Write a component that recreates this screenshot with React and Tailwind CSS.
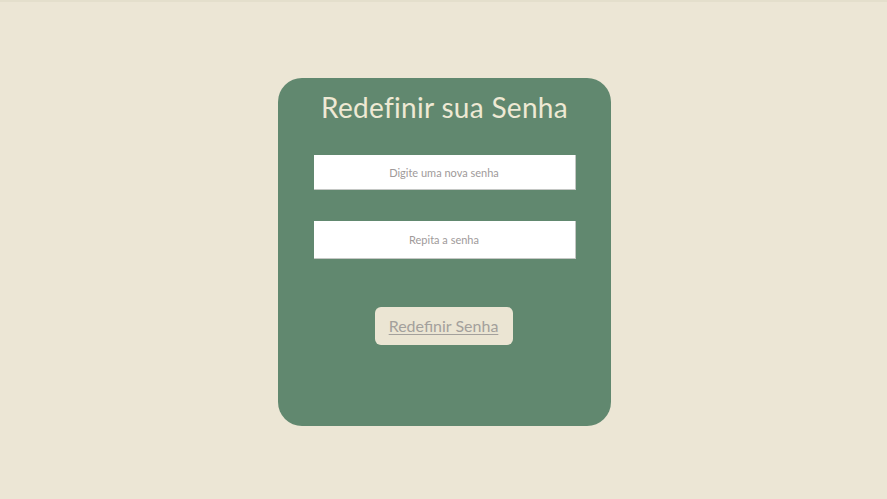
export default function App() {
  return (
    <div className="min-h-[499px] w-full bg-[#ece6d5] flex flex-col" style={{ fontFamily: "Lato, 'Noto Sans', sans-serif" }}>
      <div className="h-[2px] bg-[#e4dfcc]" />
      <div className="flex-1 flex items-start justify-center pt-[76px]">
        <div className="ml-[2px] w-[333px] h-[348px] bg-[#61886f] rounded-[24px] flex flex-col items-center pt-[11px]">
          <h1 className="text-[28px] leading-[36px] text-[#eee9d4] font-normal tracking-[0.3px]">Redefinir sua Senha</h1>
          <input
            type="password"
            placeholder="Digite uma nova senha"
            className="mt-[30px] w-[262px] h-[35px] bg-white text-center text-[11px] text-[#666] placeholder:text-[#a09a9a] outline-none border-b border-r border-[#c4c7c4]"
          />
          <input
            type="password"
            placeholder="Repita a senha"
            className="mt-[31px] w-[262px] h-[38px] bg-white text-center text-[11px] text-[#666] placeholder:text-[#a09a9a] outline-none border-b border-r border-[#c4c7c4]"
          />
          <button className="mt-[48px] -ml-[2px] w-[138px] h-[38px] rounded-[6px] bg-[#ebe5d3] text-[16px] text-[#a3a09c] underline underline-offset-2">
            Redefinir Senha
          </button>
        </div>
      </div>
    </div>
  );
}
